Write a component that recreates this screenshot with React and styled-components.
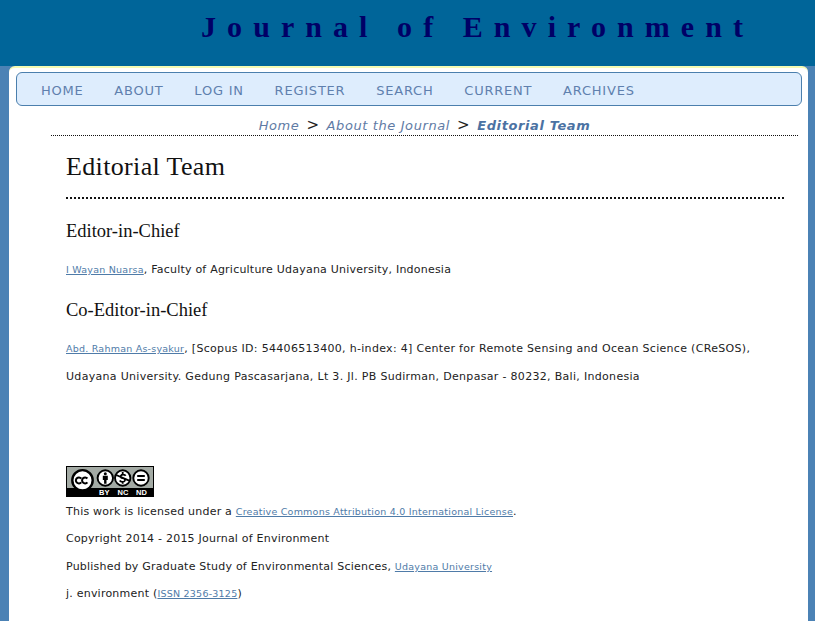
import React from 'react';
import styled, { createGlobalStyle } from 'styled-components';

const GlobalStyle = createGlobalStyle`
  html, body {
    margin: 0;
    padding: 0;
    height: 100%;
    overflow: hidden;
  }
  body {
    background: #4b82b5;
    font-family: "DejaVu Sans", Verdana, sans-serif;
  }
`;

const Page = styled.div`
  height: 621px;
  display: flex;
  flex-direction: column;
`;

const Header = styled.header`
  height: 66px;
  background: #006599;
  box-sizing: border-box;
  padding: 8px 0 0 201px;
`;

const Title = styled.h1`
  margin: 0;
  font-family: "Liberation Serif", "Times New Roman", serif;
  font-size: 30px;
  line-height: 38px;
  font-weight: 700;
  letter-spacing: 11.07px;
  color: #000066;
  white-space: nowrap;
`;

const Sheet = styled.div`
  flex: 1;
  margin: 0 7px 0 9px;
  background: #fff;
  border-top: 2px solid #f4fbb4;
  border-radius: 6px 6px 0 0;
  padding: 4px 6px 0 7px;
`;

const NavBar = styled.nav`
  height: 34px;
  box-sizing: border-box;
  background: #deedfd;
  border: 1px solid #4b7fad;
  border-radius: 6px;
  display: flex;
  align-items: center;
  padding: 2px 0 0 24px;
  gap: 30.8px;
`;

const NavItem = styled.a`
  font-size: 13px;
  color: #5f80ae;
  letter-spacing: 0.78px;
`;

const Crumbs = styled.div`
  margin: 0 4px 0 35px;
  height: 30px;
  box-sizing: border-box;
  border-bottom: 1px dotted #111;
  display: flex;
  justify-content: center;
  align-items: flex-end;
  gap: 7px;
  padding: 0 0 1px 0;
  font-size: 13px;
  line-height: 17px;
  letter-spacing: 0.6px;
`;

const Crumb = styled.a`
  font-style: italic;
  color: ${props => (props.$current ? '#4b72a3' : '#5f7ba5')};
  font-weight: ${props => (props.$current ? 700 : 400)};
`;

const Sep = styled.span`
  font-size: 15px;
  color: #222;
`;

const Content = styled.main`
  margin-left: 50px;
  margin-right: 18px;
`;

const PageTitle = styled.h2`
  margin: 0;
  padding-top: 15px;
  height: 63px;
  box-sizing: border-box;
  border-bottom: 2px dotted #111;
  font-family: "Liberation Serif", Georgia, serif;
  font-weight: 400;
  font-size: 26px;
  line-height: 32px;
  letter-spacing: 0.35px;
  color: #111;
`;

const Section = styled.h3`
  margin: 0;
  padding-top: ${props => props.$top}px;
  font-family: "Liberation Serif", Georgia, serif;
  font-weight: 400;
  font-size: 18.5px;
  line-height: 22px;
  color: #111;
`;

const Para = styled.p`
  margin: 0;
  padding-top: ${props => props.$top || 0}px;
  font-size: 11px;
  line-height: 28px;
  letter-spacing: ${props => (props.$wide ? 0.31 : 0.22)}px;
  color: #222;
`;

const SmallLink = styled.a`
  font-size: 9.5px;
  letter-spacing: 0.23px;
  color: #4f7ba8;
  text-decoration: underline;
`;

const Footer = styled.footer`
  margin-top: 75px;
`;

const Badge = styled.svg`
  display: block;
  width: 88px;
  height: 31px;
`;

const LicenseLine = styled(Para)`
  line-height: 27.4px;
`;

const CcBadge = () => (
  <Badge viewBox="0 0 88 31">
    <rect width="88" height="31" fill="#000" />
    <rect x="1" y="1" width="86" height="21" fill="#a3aaa4" />
    <circle cx="16.500" cy="14.300" r="10.200" fill="#fff" stroke="#000" strokeWidth="2.400" />
    <path d="M15.200 12.500a3 3 0 1 0 0 3.800M21.400 12.500a3 3 0 1 0 0 3.800" fill="none" stroke="#000" strokeWidth="2" />
    <circle cx="39.300" cy="12" r="7.700" fill="#fff" stroke="#000" strokeWidth="1.900" />
    <circle cx="39.300" cy="7.700" r="1.500" fill="#000" />
    <path d="M36.800 9.800h5v4.200h-1.300v3.700h-2.400v-3.700h-1.300z" fill="#000" />
    <circle cx="56.700" cy="12" r="7.700" fill="#fff" stroke="#000" strokeWidth="1.900" />
    <path d="M59.700 9.800c-.9-1.400-3.900-1.700-4.800-.2-.8 1.500.3 2.200 1.900 2.600 1.500.3 2.600 1 1.900 2.600-.8 1.500-3.900 1.200-5-.3M56.700 6v2M56.700 15.500v2.200M50.200 9l13 5.600" fill="none" stroke="#000" strokeWidth="1.800" />
    <circle cx="75" cy="12" r="7.700" fill="#fff" stroke="#000" strokeWidth="1.900" />
    <path d="M71.200 10.100h7.600M71.200 13.900h7.600" stroke="#000" strokeWidth="2" />
    <text x="33" y="29.300" fontFamily="Liberation Sans" fontWeight="700" fontSize="7.500" fill="#fff">BY</text>
    <text x="51.500" y="29.300" fontFamily="Liberation Sans" fontWeight="700" fontSize="7.500" fill="#fff">NC</text>
    <text x="70" y="29.300" fontFamily="Liberation Sans" fontWeight="700" fontSize="7.500" fill="#fff">ND</text>
  </Badge>
);

const navItems = ['HOME', 'ABOUT', 'LOG IN', 'REGISTER', 'SEARCH', 'CURRENT', 'ARCHIVES'];

const App = () => (
  <Page>
    <GlobalStyle />
    <Header>
      <Title>Journal of Environment</Title>
    </Header>
    <Sheet>
      <NavBar>
        {navItems.map(item => (
          <NavItem key={item}>{item}</NavItem>
        ))}
      </NavBar>
      <Crumbs>
        <Crumb>Home</Crumb>
        <Sep>&gt;</Sep>
        <Crumb>About the Journal</Crumb>
        <Sep>&gt;</Sep>
        <Crumb $current>Editorial Team</Crumb>
      </Crumbs>
      <Content>
        <PageTitle>Editorial Team</PageTitle>
        <Section $top={21}>Editor-in-Chief</Section>
        <Para $top={14}>
          <SmallLink>I Wayan Nuarsa</SmallLink>, Faculty of Agriculture Udayana University, Indonesia
        </Para>
        <Section $top={15}>Co-Editor-in-Chief</Section>
        <Para $top={14} $wide>
          <SmallLink>Abd. Rahman As-syakur</SmallLink>, [Scopus ID: 54406513400, h-index: 4] Center for Remote Sensing and Ocean Science (CReSOS), Udayana University. Gedung Pascasarjana, Lt 3. Jl. PB Sudirman, Denpasar - 80232, Bali, Indonesia
        </Para>
        <Footer>
          <CcBadge />
          <LicenseLine $top={1}>
            This work is licensed under a <SmallLink>Creative Commons Attribution 4.0 International License</SmallLink>.
          </LicenseLine>
          <LicenseLine>Copyright 2014 - 2015 Journal of Environment</LicenseLine>
          <LicenseLine>
            Published by Graduate Study of Environmental Sciences, <SmallLink>Udayana University</SmallLink>
          </LicenseLine>
          <LicenseLine>
            j. environment (<SmallLink>ISSN 2356-3125</SmallLink>)
          </LicenseLine>
        </Footer>
      </Content>
    </Sheet>
  </Page>
);

export default App;
